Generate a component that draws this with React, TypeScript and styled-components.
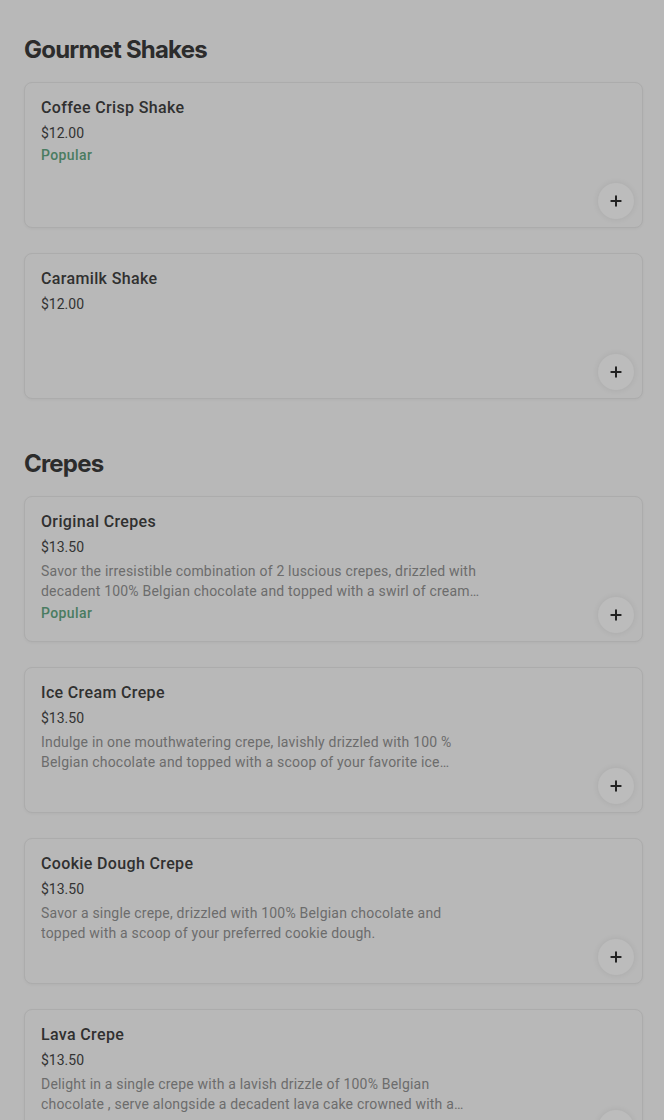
import styled, { createGlobalStyle } from "styled-components";
import { Plus } from "lucide-react";

const GlobalStyle = createGlobalStyle`
  html, body {
    margin: 0;
    padding: 0;
    background: #b8b8b8;
  }
  body {
    font-family: Roboto, "Liberation Sans", sans-serif;
    -webkit-font-smoothing: antialiased;
  }
`;

type Item = {
  name: string;
  price: string;
  description?: string;
  popular?: boolean;
};

type Section = {
  title: string;
  items: Item[];
};

const sections: Section[] = [
  {
    title: "Gourmet Shakes",
    items: [
      { name: "Coffee Crisp Shake", price: "$12.00", popular: true },
      { name: "Caramilk Shake", price: "$12.00" },
    ],
  },
  {
    title: "Crepes",
    items: [
      {
        name: "Original Crepes",
        price: "$13.50",
        description:
          "Savor the irresistible combination of 2 luscious crepes, drizzled with decadent 100% Belgian chocolate and topped with a swirl of cream cheese frosting.",
        popular: true,
      },
      {
        name: "Ice Cream Crepe",
        price: "$13.50",
        description:
          "Indulge in one mouthwatering crepe, lavishly drizzled with 100 % Belgian chocolate and topped with a scoop of your favorite ice cream flavour.",
      },
      {
        name: "Cookie Dough Crepe",
        price: "$13.50",
        description:
          "Savor a single crepe, drizzled with 100% Belgian chocolate and topped with a scoop of your preferred cookie dough.",
      },
      {
        name: "Lava Crepe",
        price: "$13.50",
        description:
          "Delight in a single crepe with a lavish drizzle of 100% Belgian chocolate , serve alongside a decadent lava cake crowned with a scoop of ice cream.",
      },
    ],
  },
];

const Page = styled.main`
  display: flex;
  flex-direction: column;
  gap: 50px;
  padding: 35px 21px 0 24px;
`;

const SectionBlock = styled.section`
  display: flex;
  flex-direction: column;
  gap: 17px;
`;

const SectionTitle = styled.h2`
  margin: 0;
  font-family: Inter, "Liberation Sans", sans-serif;
  font-size: 24px;
  line-height: 30px;
  font-weight: 700;
  letter-spacing: -0.8px;
  color: #2c2c2c;
`;

const CardList = styled.div`
  display: flex;
  flex-direction: column;
  gap: 25px;
`;

const Card = styled.article`
  position: relative;
  box-sizing: border-box;
  height: 146px;
  padding: 15px 16px;
  border: 1px solid #acacac;
  border-radius: 8px;
  background: #b8b8b8;
  box-shadow: 0 1px 3px rgba(0, 0, 0, 0.04);
  display: flex;
  flex-direction: column;
`;

const ItemName = styled.h3`
  margin: 0;
  font-size: 16px;
  line-height: 20px;
  font-weight: 500;
  letter-spacing: 0.35px;
  color: #303030;
`;

const Price = styled.div`
  margin-top: 5px;
  font-size: 14px;
  line-height: 20px;
  color: #333333;
`;

const Description = styled.p`
  margin: 4px 0 0;
  max-width: 440px;
  font-size: 14px;
  line-height: 20px;
  letter-spacing: 0.2px;
  color: #6c6c6c;
  display: -webkit-box;
  -webkit-line-clamp: 2;
  -webkit-box-orient: vertical;
  overflow: hidden;
`;

const Badge = styled.div`
  margin-top: 2px;
  font-size: 14px;
  line-height: 20px;
  font-weight: 500;
  letter-spacing: 0.4px;
  color: #4a7c61;
`;

const AddButton = styled.button`
  position: absolute;
  right: 8px;
  bottom: 8px;
  width: 36px;
  height: 36px;
  padding: 0;
  border: none;
  border-radius: 50%;
  background: #bcbcbc;
  box-shadow: 0 0 6px rgba(0, 0, 0, 0.08);
  display: flex;
  align-items: center;
  justify-content: center;
  color: #222222;
  cursor: pointer;
`;

const MenuCard = ({ item }: { item: Item }) => (
  <Card>
    <ItemName>{item.name}</ItemName>
    <Price>{item.price}</Price>
    {item.description && <Description>{item.description}</Description>}
    {item.popular && <Badge>Popular</Badge>}
    <AddButton aria-label={`Add ${item.name}`}>
      <Plus size={16} strokeWidth={3} />
    </AddButton>
  </Card>
);

export default function App() {
  return (
    <>
      <GlobalStyle />
      <Page>
        {sections.map((section) => (
          <SectionBlock key={section.title}>
            <SectionTitle>{section.title}</SectionTitle>
            <CardList>
              {section.items.map((item) => (
                <MenuCard key={item.name} item={item} />
              ))}
            </CardList>
          </SectionBlock>
        ))}
      </Page>
    </>
  );
}
